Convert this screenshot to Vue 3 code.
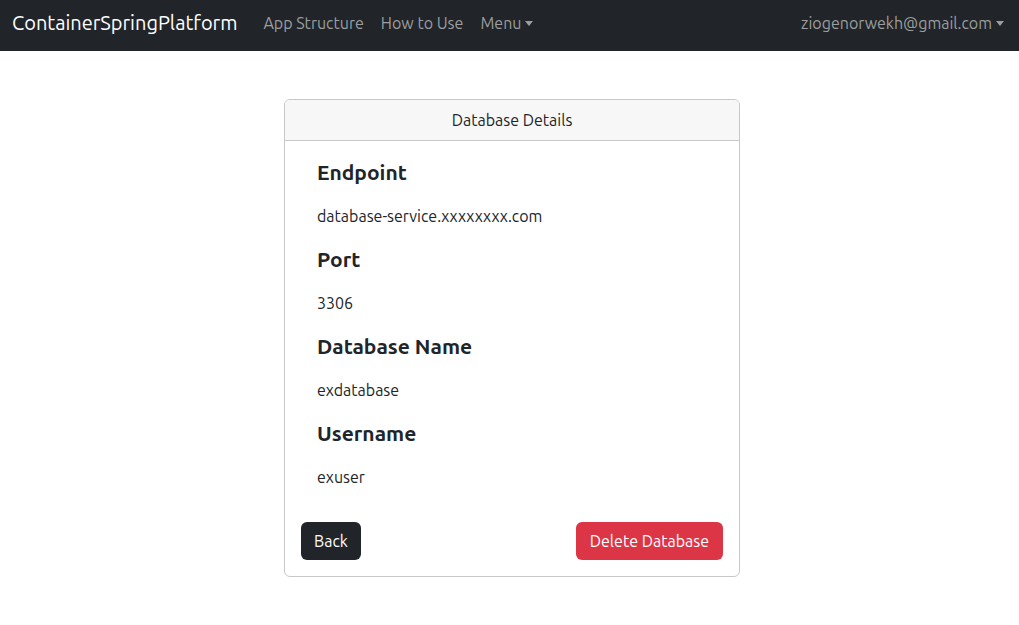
<script setup>
const links = ['App Structure', 'How to Use']
const details = [
  { label: 'Endpoint', value: 'database-service.xxxxxxxx.com' },
  { label: 'Port', value: '3306' },
  { label: 'Database Name', value: 'exdatabase' },
  { label: 'Username', value: 'exuser' },
]
</script>

<template>
  <nav class="navbar">
    <a class="brand" href="#">ContainerSpringPlatform</a>
    <div class="nav-links">
      <a v-for="link in links" :key="link" class="nav-link" href="#">{{ link }}</a>
      <button type="button" class="nav-link dropdown">Menu</button>
    </div>
    <button type="button" class="nav-link dropdown">ziogenorwekh@gmail.com</button>
  </nav>
  <main class="container">
    <section class="card">
      <header class="card-header">Database Details</header>
      <div class="card-body">
        <dl class="details">
          <template v-for="item in details" :key="item.label">
            <dt>{{ item.label }}</dt>
            <dd>{{ item.value }}</dd>
          </template>
        </dl>
        <div class="actions">
          <button type="button" class="btn dark">Back</button>
          <button type="button" class="btn danger">Delete Database</button>
        </div>
      </div>
    </section>
  </main>
</template>

<style>
body {
  margin: 0;
  background: #fff;
}
</style>

<style scoped>
.navbar,
.container {
  font-family: Ubuntu, "Noto Sans", "Open Sans", sans-serif;
  font-size: 16px;
  line-height: 24px;
  color: #212529;
}
.navbar {
  display: flex;
  align-items: center;
  box-sizing: border-box;
  padding: 3px 7px 8px 12px;
  background: #212529;
}
.brand {
  margin-right: 18px;
  font-size: 20px;
  line-height: 30px;
  color: #fff;
  text-decoration: none;
}
.nav-links {
  display: flex;
  flex: 1;
  gap: 1px;
}
.nav-link {
  padding: 8px;
  border: 0;
  background: none;
  font: inherit;
  color: #9b9d9e;
  text-decoration: none;
  white-space: nowrap;
}
.dropdown::after {
  content: "";
  display: inline-block;
  margin-left: 4px;
  vertical-align: 3px;
  border-top: 5px solid;
  border-right: 4px solid transparent;
  border-left: 4px solid transparent;
}
.container {
  display: flex;
  justify-content: center;
  padding: 48px 12px;
}
.card {
  box-sizing: border-box;
  width: 456px;
  max-width: 100%;
  margin-left: 5px;
  border: 1px solid #c8c8c9;
  border-radius: 6px;
  overflow: hidden;
}
.card-header {
  padding: 8px 16px;
  border-bottom: 1px solid #c8c8c9;
  background: #f7f7f7;
  text-align: center;
}
.card-body {
  padding: 16px;
}
.details {
  margin: 0;
  padding: 3px 16px 14px;
}
.details dt {
  margin-bottom: 20px;
  font-size: 21px;
  line-height: 24px;
  font-weight: 700;
}
.details dd {
  margin: 0 0 19px;
}
.actions {
  display: flex;
  justify-content: space-between;
}
.btn {
  padding: 7px 13px;
  border: 0;
  border-radius: 6px;
  font: inherit;
  color: #fff;
}
.dark {
  background: #212529;
}
.danger {
  padding: 7px 14px;
  background: #dc3545;
}
</style>
